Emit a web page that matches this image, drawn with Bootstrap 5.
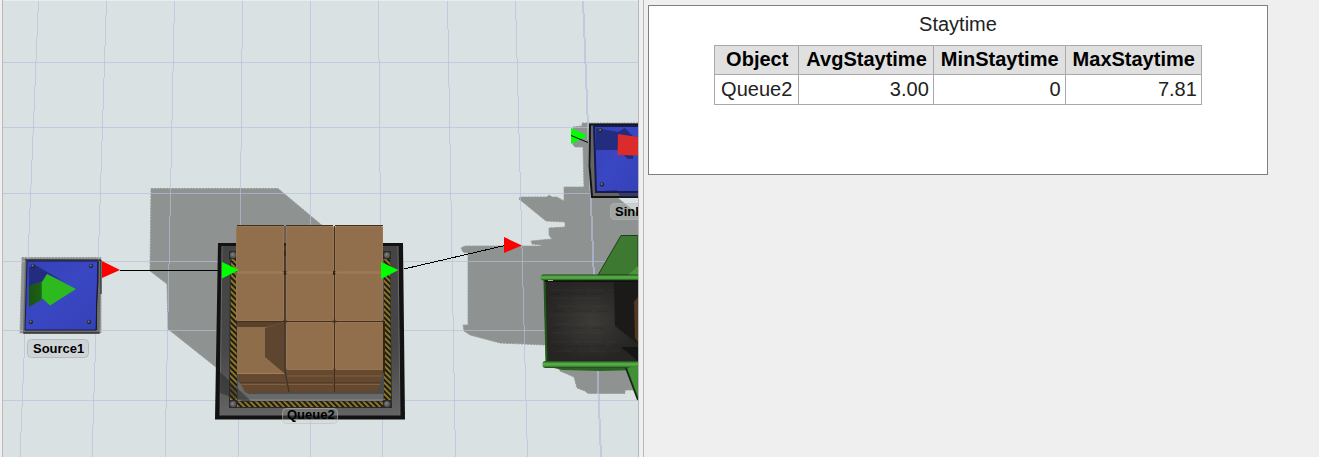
<!DOCTYPE html>
<html lang="en">
<head>
<meta charset="utf-8">
<meta name="viewport" content="width=device-width, initial-scale=1">
<title>Staytime</title>
<link href="https://cdn.jsdelivr.net/npm/bootstrap@5.3.0/dist/css/bootstrap.min.css" rel="stylesheet">
<script src="https://cdn.jsdelivr.net/npm/bootstrap@5.3.0/dist/js/bootstrap.bundle.min.js"></script>
<style>
  body { background: #efefef; color: #222; font-family: "Liberation Sans", Arial, sans-serif; font-size: 20px; line-height: 23px; }
  .workspace { grid-template-columns: minmax(0, 637fr) minmax(0, 676fr); padding-left: 2px; gap: 4px; }
  .model-view { background: #d9e1e3; border: solid #b9b9b9; border-width: 0 1px; }
  .model-view svg { border-top: 1px solid #e4ecf7; }
  .dashboard { border-left: 1px solid #b9b9b9; padding: 5px 51px 5px 4px; }
  .stat-panel { min-height: 170px; border: 1px solid #7f7f7f; border-radius: 0; color: #222; padding-top: 7px; }
  .stat-panel h1 { font-size: 20px; line-height: 23px; margin-bottom: 9px; }
  .stat-table { border-collapse: collapse; }
  .stat-table th, .stat-table td { border: 1px solid #a9a9a9; padding: 3px 6px 3px 7px; white-space: nowrap; }
  .stat-table td { padding: 3px 4px 3px 6px; }
  .stat-table thead th { background: #e0e0e0; color: #000; padding-top: 2px; }
  .stat-table thead th:first-child { padding-right: 10px; padding-left: 11px; }
  .tag { font: bold 13px "Liberation Sans", Arial, sans-serif; }
</style>
</head>
<body>
<main class="workspace d-grid vh-100 overflow-hidden">
  <section class="model-view overflow-hidden" aria-label="3D model">
    <svg class="d-block w-100 vh-100" viewBox="3 1 635 456" preserveAspectRatio="xMinYMin slice">
      <defs>
        <pattern id="hazard" width="4" height="4" patternUnits="userSpaceOnUse" patternTransform="rotate(-45)">
          <rect width="4" height="4" fill="#1d1b14"/><rect width="2" height="4" fill="#8d752a"/>
        </pattern>
        <linearGradient id="steel" x1="0" y1="0" x2="0" y2="1"><stop offset="0" stop-color="#434443"/><stop offset=".6" stop-color="#464746"/><stop offset="1" stop-color="#636463"/></linearGradient>
        <linearGradient id="blue" x1="0" y1="0" x2="1" y2="1"><stop offset="0" stop-color="#3541b4"/><stop offset=".5" stop-color="#3a47c3"/><stop offset="1" stop-color="#3541b6"/></linearGradient>
        <linearGradient id="cone" x1="0" y1="0" x2="1" y2="0"><stop offset="0" stop-color="#17550f"/><stop offset=".8" stop-color="#1d5f16"/><stop offset="1" stop-color="#27921f"/></linearGradient>
        <linearGradient id="rail" x1="0" y1="0" x2="0" y2="1"><stop offset="0" stop-color="#1f4d19"/><stop offset=".4" stop-color="#5bb34b"/><stop offset=".7" stop-color="#4a9b3c"/><stop offset="1" stop-color="#183c13"/></linearGradient>
        <radialGradient id="belt"><stop offset="0" stop-color="#3d3b38"/><stop offset="1" stop-color="#262523"/></radialGradient>
        <g id="bolt"><circle r="2.2" fill="#232b3e"/><circle r="1" cx="-.4" cy="-.6" fill="#77797d"/></g>
        <g id="boltBig"><rect x="-4" y="-4" width="8" height="8" fill="#2b2b2b"/><circle r="3" fill="#5d5e5d"/><circle r="1.4" cx="-.4" cy="-.4" fill="#7c7d7c"/></g>
      </defs>

      <!-- shadows on the floor -->
      <g fill="#8e9290" stroke="#969b99" stroke-width="1" stroke-dasharray="2 1">
        <path d="M151 188.500H278L336 237V280H222V372L168 329L167 284L150 271Z"/>
        <path d="M582 123H638V345H545L500 343L470 335L464 331L463 325H468V300L468 253L463 252L461 248L465 246H541V245L532 244L531 241L541 240L552 239L549 235V228L565 227V222L546 221L519 199L520 197H547L549 195L552 197H557L564 201V187H584L583 147H575L573 145V127L582 126Z"/>
        <path d="M558 365L560 371L574 377L577 388L585 391L588 393.500H625V390H638V365Z"/>
        <path d="M22 257.500H101V333H20Z"/>
      </g>
      <path d="M617 197H638V214Z" fill="#d9e1e3"/>

      <!-- floor grid -->
      <g stroke="#b5bfdb" stroke-opacity=".65" fill="none" shape-rendering="crispEdges">
        <path d="M3 62.500H638M3 127.500H638M3 193.500H638M3 261.500H638M3 330.500H638M3 400.500H638"/>
        <path d="M38.500 0L20 457M106.500 0L92 457M174.500 0L165 457M242.500 0L238 457M310.500 0V457M378.500 0L382.500 457M447.500 0L455.500 457M515.500 0L527.500 457"/>
        <path d="M583 0L601 457" stroke-width="2"/>
      </g>

      <!-- Source1 -->
      <path d="M25 259L101 260L99.500 333.500H23Z" fill="#6d6c67"/>
      <path d="M25.500 260H101V294M99.500 333H23.500" fill="none" stroke="#151515"/>
      <path d="M27 261H98L96 330H25Z" fill="url(#blue)" stroke="#151b55"/>
      <path d="M98 262V282L96.500 304V330" fill="none" stroke="#161a38"/>
      <path d="M29 267L35 265L63 281L47 274L42 282L29 286Z" fill="#242c80"/>
      <path d="M29 286L43 281V299L29 307Z" fill="url(#cone)"/>
      <path d="M47 274L76 289L50 305.500L42 298V282Z" fill="#2dba1e"/>
      <use href="#bolt" x="33" y="266"/><use href="#bolt" x="91" y="266"/><use href="#bolt" x="31" y="322"/><use href="#bolt" x="89" y="322"/>
      <path d="M120 270.500H222" stroke="#000" shape-rendering="crispEdges"/>
      <path d="M102 261L120 270L102 278Z" fill="#f00"/>
      <rect x="27.500" y="339.500" width="61" height="18" rx="4" fill="#cfd5d6" stroke="#b6bbbd"/>
      <text class="tag" x="33" y="353">Source1</text>

      <!-- Queue2 platform -->
      <path d="M218 243H403L405 419.500H215Z" fill="#121212"/>
      <path d="M222 246H398L400 415.500H220Z" fill="url(#steel)"/>
      <path d="M222 246L220 415.500M398 246L400 415.500" stroke="#6a6b6a" fill="none"/>
      <path d="M230 251H390L392 408H229Z" fill="#2a2a29"/>
      <path d="M231 256H236L237 402H230ZM384 256H390L391 402H384ZM236 401.500H385V407H235Z" fill="url(#hazard)"/>
      <path d="M237 256H384V401H237Z" fill="#4c4c4b"/>
      <path d="M238 381L248 394H383V401H238Z" fill="#686a69"/>
      <path d="M238 400H384" stroke="#8b8d8c"/>
      <path d="M220 372L252 402H245L220 393Z" fill="#242524" opacity=".5"/>
      <use href="#boltBig" x="233" y="255"/><use href="#boltBig" x="387" y="255"/><use href="#boltBig" x="233" y="404"/><use href="#boltBig" x="387" y="404"/>

      <!-- stacked boxes -->
      <path d="M237 374H285L288 392.500H245ZM285 369H334V392.500H290ZM334 369H384L377 392.500H334Z" fill="#644930"/>
      <path d="M240 384.500H286M287 376H333M288 384.500H333M335 376H382M335 384.500H380" stroke="#80603f"/>
      <path d="M240 382.500H286M288 382.500H333M335 382.500H380" stroke="#543d28"/>
      <path d="M237 320H285V329H238Z" fill="#59412b"/>
      <path d="M237 327H267L284 322V374H237Z" fill="#8e6d4a"/>
      <path d="M237 373.500H284" stroke="#a37e59"/>
      <path d="M265 328L284 322V373L265 357Z" fill="#5e452f"/>
      <g fill="#916f4c" stroke="#9a7652">
        <rect x="236.500" y="226.500" width="47" height="45" rx="1"/><rect x="286.500" y="226.500" width="47" height="45" rx="1"/><rect x="335.500" y="226.500" width="47" height="45" rx="1"/>
        <rect x="236.500" y="273.500" width="47" height="47" rx="1"/><rect x="286.500" y="273.500" width="47" height="47" rx="1"/><rect x="335.500" y="273.500" width="47" height="47" rx="1"/>
        <rect x="286.500" y="322.500" width="47" height="47" rx="1"/><rect x="335.500" y="322.500" width="48" height="47" rx="1"/>
      </g>
      <path d="M236 272.500H383" stroke="#9d7954"/>
      <path d="M237 225.500H284M286 225.500H333M335 225.500H383M285 226V370L289 392M334.500 226V392M236 321.500H285M286 321.500H384" fill="none" stroke="#432f1d"/>
      <path d="M285 271V275M334 271V275M384 321V373" stroke="#352516" stroke-width="2"/>
      <path d="M404 269L507 245" stroke="#000" shape-rendering="crispEdges"/>
      <path d="M222 262L239 270L222 278.500ZM381 262L398.500 270L381 279Z" fill="#0f0"/>
      <path d="M504 237L522 245.500L504 253Z" fill="#f00"/>
      <rect x="282.500" y="408.500" width="55" height="15" rx="4" fill="#ccc" fill-opacity=".18" stroke="#bbb" stroke-opacity=".55"/>
      <text class="tag" x="287" y="419">Queue2</text>

      <!-- Sink -->
      <path d="M589 124H638V197.500H592Z" fill="#66645f"/>
      <path d="M638 124.500H590L589.500 165L592 197H638" fill="none" stroke="#141414" stroke-width="2"/>
      <path d="M594 126H640V192H596Z" fill="url(#blue)" stroke="#151b55" stroke-width="2"/>
      <path d="M596 128L618 132L625 128L633 136V159H628L618 150H596Z" fill="#242c80"/>
      <path d="M603 191L617 190L620 197H638V192Z" fill="#1b2160" opacity=".6"/>
      <path d="M618 134L638 137V155.500L617.500 155Z" fill="#dc2b2b"/>
      <use href="#bolt" x="600.500" y="130.500"/><use href="#bolt" x="602" y="184.500"/>
      <path d="M571 128L588 136L571 144Z" fill="#0f0"/>
      <path d="M571 135.500L588 142.500" stroke="#000"/>
      <rect x="610.500" y="203.500" width="38" height="16" rx="4" fill="#b9bebd" fill-opacity=".45" stroke="#b9bebd" stroke-opacity=".5"/>
      <text class="tag" x="615" y="216">Sink</text>

      <!-- processor -->
      <path d="M621 235.500H638V275H598Z" fill="#3d7930" stroke="#1e4018"/>
      <path d="M628 275L638 266V275Z" fill="#4c943d"/>
      <path d="M544 280H638V362H546Z" fill="url(#belt)"/>
      <path d="M544.500 281L546.500 362" stroke="#1f5a19" stroke-width="2"/>
      <path d="M552 290H612M550 298H600M558 306H614M550 315H608M555 324H614M552 333H610M550 342H615M556 351H620" stroke="#4a4743" stroke-opacity=".3" stroke-dasharray="17 5 9 3"/>
      <path d="M548 294H608M553 311H614M549 328H611M551 346H619" stroke="#161615" stroke-opacity=".2" stroke-dasharray="12 7 20 4"/>
      <path d="M614 282H638V344L615 326Z" fill="#1b1a19"/>
      <path d="M621 347H638V361Z" fill="#151514"/>
      <path d="M638 297L634 302L635 338L638 342Z" fill="#513823"/>
      <path d="M545 281H638" stroke="#10100f" stroke-width="2"/>
      <rect x="540.500" y="274.500" width="105" height="6" rx="3" fill="url(#rail)"/>
      <path d="M548 280.500H553" stroke="#a7b3a4"/>
      <path d="M546 366H638V370L600 371L562 370Z" fill="#2b6322"/>
      <rect x="542.500" y="361" width="103" height="7" rx="3" fill="url(#rail)"/>
      <path d="M627 368L638 365V400Z" fill="#429036"/>
      <path d="M626 368L638 400" stroke="#142d10" stroke-width="2"/>
    </svg>
  </section>

  <aside class="dashboard">
    <section class="card stat-panel align-items-center">
      <h1 class="fw-normal" id="staytime">Staytime</h1>
      <table class="stat-table" aria-labelledby="staytime">
        <thead class="text-center">
          <tr><th scope="col">Object</th><th scope="col">AvgStaytime</th><th scope="col">MinStaytime</th><th scope="col">MaxStaytime</th></tr>
        </thead>
        <tbody>
          <tr><td>Queue2</td><td class="text-end">3.00</td><td class="text-end">0</td><td class="text-end">7.81</td></tr>
        </tbody>
      </table>
    </section>
  </aside>
</main>
</body>
</html>
